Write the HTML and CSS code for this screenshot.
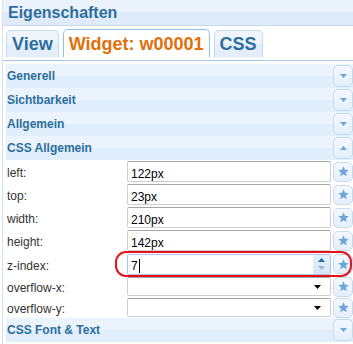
FILE: index.html
```html
<!DOCTYPE html>
<html lang="de">
<head>
  <meta charset="UTF-8" />
  <title>Eigenschaften</title>
  <link rel="stylesheet" href="styles.css">
</head>
<body>

  <div class="dialog">
    <div class="header">Eigenschaften</div>

    <ul class="tabs">
      <li class="tab">View</li>
      <li class="tab active">Widget: w00001</li>
      <li class="tab">CSS</li>
    </ul>

    <div class="panel">
      <div class="group-head">
        <span>Generell</span>
        <button type="button" class="icon-btn"><svg width="7" height="4" viewBox="0 0 7 4"><polygon points="0,0 7,0 3.5,4" /></svg></button>
      </div>
      <div class="group-head">
        <span>Sichtbarkeit</span>
        <button type="button" class="icon-btn"><svg width="7" height="4" viewBox="0 0 7 4"><polygon points="0,0 7,0 3.5,4" /></svg></button>
      </div>
      <div class="group-head">
        <span>Allgemein</span>
        <button type="button" class="icon-btn"><svg width="7" height="4" viewBox="0 0 7 4"><polygon points="0,0 7,0 3.5,4" /></svg></button>
      </div>
      <div class="group-head">
        <span>CSS Allgemein</span>
        <button type="button" class="icon-btn"><svg width="7" height="4" viewBox="0 0 7 4"><polygon points="0,4 7,4 3.5,0" /></svg></button>
      </div>

      <div class="prop-row">
        <label>left:</label>
        <input class="field" type="text" value="122px" />
        <button type="button" class="star-btn"><svg width="11" height="11" viewBox="0 0 12 12"><polygon points="6,0.4 7.6,4.2 11.7,4.5 8.6,7.2 9.5,11.3 6,9.1 2.5,11.3 3.4,7.2 0.3,4.5 4.4,4.2" /></svg></button>
      </div>
      <div class="prop-row">
        <label>top:</label>
        <input class="field" type="text" value="23px" />
        <button type="button" class="star-btn"><svg width="11" height="11" viewBox="0 0 12 12"><polygon points="6,0.4 7.6,4.2 11.7,4.5 8.6,7.2 9.5,11.3 6,9.1 2.5,11.3 3.4,7.2 0.3,4.5 4.4,4.2" /></svg></button>
      </div>
      <div class="prop-row">
        <label>width:</label>
        <input class="field" type="text" value="210px" />
        <button type="button" class="star-btn"><svg width="11" height="11" viewBox="0 0 12 12"><polygon points="6,0.4 7.6,4.2 11.7,4.5 8.6,7.2 9.5,11.3 6,9.1 2.5,11.3 3.4,7.2 0.3,4.5 4.4,4.2" /></svg></button>
      </div>
      <div class="prop-row">
        <label>height:</label>
        <input class="field" type="text" value="142px" />
        <button type="button" class="star-btn"><svg width="11" height="11" viewBox="0 0 12 12"><polygon points="6,0.4 7.6,4.2 11.7,4.5 8.6,7.2 9.5,11.3 6,9.1 2.5,11.3 3.4,7.2 0.3,4.5 4.4,4.2" /></svg></button>
      </div>
      <div class="prop-row tall">
        <label>z-index:</label>
        <div class="field spin-field">
          <span class="spin-value">7<span class="caret"></span></span>
          <span class="spinner">
            <svg width="7" height="4" viewBox="0 0 7 4" class="spin-up"><polygon points="0,4 7,4 3.5,0" /></svg>
            <svg width="7" height="4" viewBox="0 0 7 4" class="spin-down"><polygon points="0,0 7,0 3.5,4" /></svg>
          </span>
        </div>
        <button type="button" class="star-btn"><svg width="11" height="11" viewBox="0 0 12 12"><polygon points="6,0.4 7.6,4.2 11.7,4.5 8.6,7.2 9.5,11.3 6,9.1 2.5,11.3 3.4,7.2 0.3,4.5 4.4,4.2" /></svg></button>
      </div>
      <div class="prop-row short">
        <label>overflow-x:</label>
        <div class="field select-field">
          <svg width="7" height="4" viewBox="0 0 7 4"><polygon points="0,0 7,0 3.5,4" /></svg>
        </div>
        <button type="button" class="star-btn"><svg width="11" height="11" viewBox="0 0 12 12"><polygon points="6,0.4 7.6,4.2 11.7,4.5 8.6,7.2 9.5,11.3 6,9.1 2.5,11.3 3.4,7.2 0.3,4.5 4.4,4.2" /></svg></button>
      </div>
      <div class="prop-row short">
        <label>overflow-y:</label>
        <div class="field select-field">
          <svg width="7" height="4" viewBox="0 0 7 4"><polygon points="0,0 7,0 3.5,4" /></svg>
        </div>
        <button type="button" class="star-btn"><svg width="11" height="11" viewBox="0 0 12 12"><polygon points="6,0.4 7.6,4.2 11.7,4.5 8.6,7.2 9.5,11.3 6,9.1 2.5,11.3 3.4,7.2 0.3,4.5 4.4,4.2" /></svg></button>
      </div>

      <div class="group-head">
        <span>CSS Font &amp; Text</span>
        <button type="button" class="icon-btn"><svg width="7" height="4" viewBox="0 0 7 4"><polygon points="0,0 7,0 3.5,4" /></svg></button>
      </div>
    </div>

    <!-- red annotation around the z-index row -->
    <div class="highlight"></div>
  </div>

</body>
</html>
```

FILE: styles.css
```css
* {
  box-sizing: border-box;
}

body {
  margin: 0;
  width: 353px;
  height: 344px;
  overflow: hidden;
  background: #fff;
  font-family: "Liberation Sans", Arial, sans-serif;
}

.dialog {
  position: relative;
  height: 344px;
  margin-left: 2px;
  border-left: 1px solid #d3e2f1;
}

.header {
  height: 26px;
  padding: 1px 0 0 5px;
  line-height: 24px;
  font-size: 16px;
  font-weight: bold;
  color: #2e6e9e;
  background: linear-gradient(#eaf3fc 50%, #dfebf8 50%);
  border-bottom: 1px solid #c5dbec;
}

.tabs {
  display: flex;
  align-items: flex-start;
  gap: 4px;
  list-style: none;
  margin: 0;
  padding: 4px 0 0 3px;
  height: 35px;
  border-bottom: 1px solid #a9c9e8;
}

.tab {
  height: 27px;
  padding: 0 5px;
  line-height: 26px;
  font-size: 18px;
  font-weight: bold;
  color: #2e6e9e;
  background: linear-gradient(#eef5fd 50%, #e3eefa 50%);
  border: 1px solid #c5dbec;
  border-bottom: none;
  border-radius: 5px 5px 0 0;
}

.tab.active {
  height: 28px;
  margin-top: -1px;
  padding-top: 1px;
  color: #e17009;
  background: #fff;
  border-color: #8fc0ea;
}

.panel {
  padding: 3px 0 0 3px;
}

.group-head {
  display: flex;
  align-items: center;
  justify-content: space-between;
  height: 24px;
  padding-left: 1px;
  font-size: 12px;
  font-weight: bold;
  color: #2e6e9e;
  background: linear-gradient(#ebf4fd 50%, #e0eefb 50%);
}

.icon-btn,
.star-btn {
  display: flex;
  align-items: center;
  justify-content: center;
  width: 20px;
  padding: 0;
  border: 1px solid #c5dbec;
  border-radius: 5px;
  background: linear-gradient(#f3f8fe, #e4effb);
  fill: #6ea6da;
}

.icon-btn {
  height: 22px;
}

.star-btn {
  height: 20px;
  margin-left: 2px;
}

.prop-row {
  display: flex;
  align-items: center;
  height: 23px;
}

.prop-row.tall {
  height: 24px;
}

.prop-row.short {
  height: 21px;
}

.prop-row label {
  width: 121px;
  padding: 3px 0 0 1px;
  font-size: 12px;
  color: #333;
}

.field {
  width: 204px;
  height: 21px;
  margin: 0;
  padding: 4px 3px 0;
  font: 12px "Liberation Sans", Arial, sans-serif;
  color: #000;
  background: #fff;
  border: 1px solid #cfcfcf;
  border-top-color: #a5a5a5;
  border-radius: 2px;
  outline: none;
}

.spin-field {
  display: flex;
  align-items: center;
  justify-content: space-between;
  padding: 0 0 0 3px;
  border-color: #a9c8e6;
}

.spin-value {
  display: flex;
  align-items: center;
  padding-top: 3px;
}

.caret {
  display: inline-block;
  width: 1px;
  height: 14px;
  margin-left: 1px;
  background: #000;
}

.spinner {
  display: flex;
  flex-direction: column;
  align-items: center;
  justify-content: center;
  gap: 4px;
  width: 17px;
  height: 19px;
  background: linear-gradient(#e4eff9, #d7e7f6);
}

.spin-up {
  fill: #1c6cb8;
}

.spin-down {
  fill: #93b9de;
}

.select-field {
  display: flex;
  align-items: center;
  justify-content: flex-end;
  height: 19px;
  padding: 0 9px 0 0;
  fill: #000;
}

.highlight {
  position: absolute;
  left: 112px;
  top: 251px;
  width: 237px;
  height: 26px;
  border: 2px solid #e4131b;
  border-radius: 11px;
}
```
